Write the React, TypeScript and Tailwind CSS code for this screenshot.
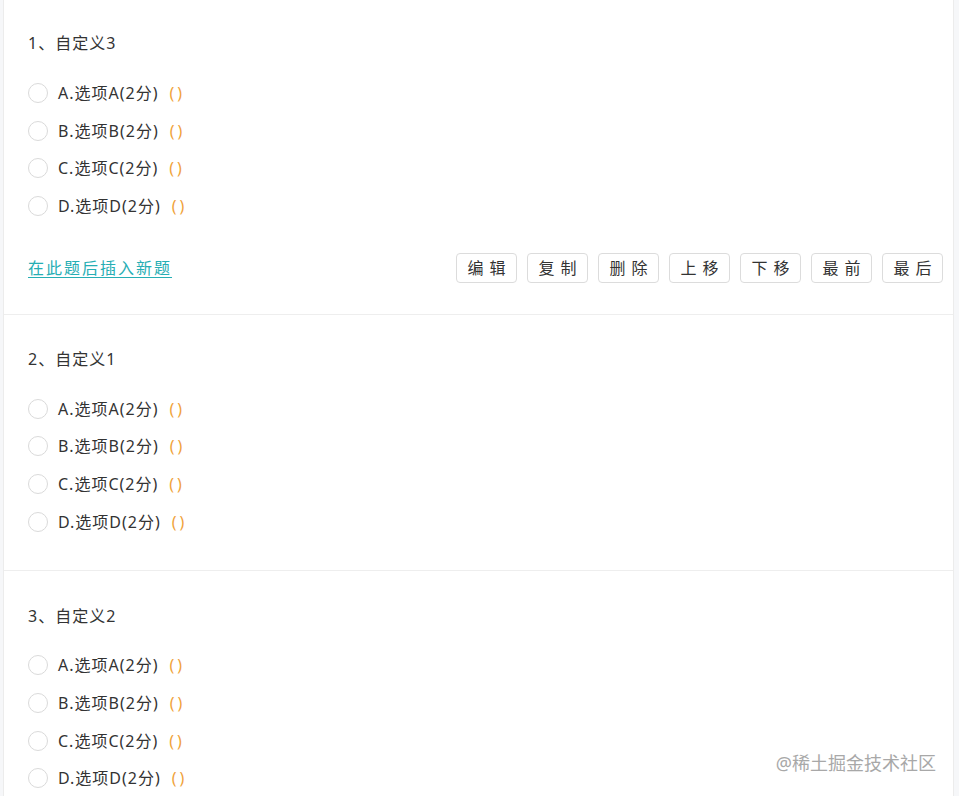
const options = ["A.选项A(2分)", "B.选项B(2分)", "C.选项C(2分)", "D.选项D(2分)"]
const actions = ["编辑", "复制", "删除", "上移", "下移", "最前", "最后"]

const Question = ({ title, top, footer }: { title: string; top: string; footer?: boolean }) => {
  return (
    <div className={`border-b border-[#eeeeee] ${top} ${footer ? "pb-[31px]" : "pb-[29px]"}`}>
      <div className="pl-[24px] text-[16px] leading-[24px] tracking-[1px] text-[#333]">{title}</div>

      <div className="mt-[19px] pl-[24px]">
        {options.map((opt) => (
          <div key={opt} className="flex h-[37.7px] items-center">
            <span className="h-[20px] w-[20px] rounded-full border border-[#dadada] bg-white" />
            <span className="ml-[10px] text-[16px] tracking-[1px] text-[#333]">{opt}</span>
            <span className="ml-[11px] text-[16px] tracking-[3px] text-[#f0a23a]">()</span>
          </div>
        ))}
      </div>

      {footer && (
        <div className="mt-[28px] flex items-center justify-between pl-[24px] pr-[10px]">
          <a href="#" className="text-[16px] tracking-[2px] text-[#26aeb4] underline underline-offset-[3px]">在此题后插入新题</a>
          <div className="flex gap-[10px]">
            {actions.map((a) => (
              <button key={a} className="flex h-[30px] w-[61px] items-center justify-center rounded-[4px] border border-[#dcdcdc] bg-white pl-[6px] text-[16px] tracking-[6px] text-[#333]">
                {a}
              </button>
            ))}
          </div>
        </div>
      )}
    </div>
  )
}

const App = () => {
  return (
    <div className="relative h-[796px] overflow-hidden bg-[#f6f7f9]" style={{ fontFamily: '"Noto Sans", "Noto Sans CJK SC", sans-serif' }}>
      <div className="ml-[3px] w-[951px] border-x border-[#ececec] bg-white">
        <Question title="1、自定义3" top="pt-[31px]" footer />
        <Question title="2、自定义1" top="pt-[32px]" />
        <Question title="3、自定义2" top="pt-[33px]" />
      </div>
      <div className="absolute bottom-[21px] right-[23px] text-[18px] leading-[24px] text-[#a8a8a8]">@稀土掘金技术社区</div>
    </div>
  )
}

export default App
